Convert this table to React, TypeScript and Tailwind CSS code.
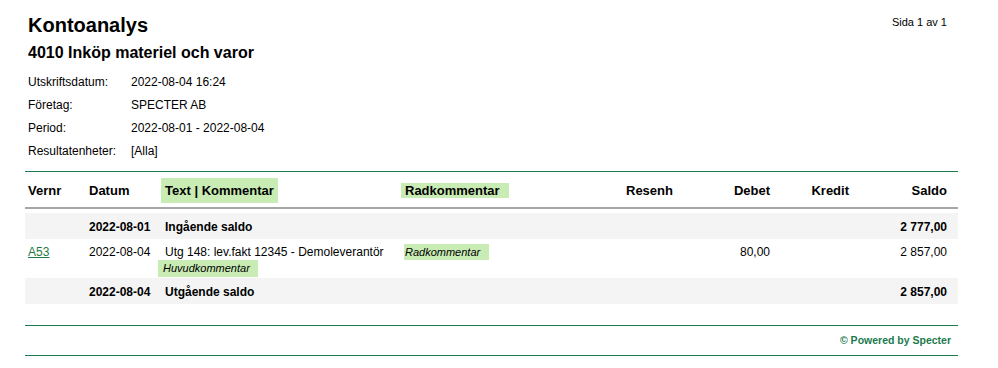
import React from "react";

type Row = {
  kind: "balance" | "entry";
  vernr?: string;
  datum: string;
  text: string;
  comment?: string;
  radkommentar?: string;
  debet?: string;
  kredit?: string;
  saldo: string;
};

const rows: Row[] = [
  { kind: "balance", datum: "2022-08-01", text: "Ingående saldo", saldo: "2 777,00" },
  {
    kind: "entry",
    vernr: "A53",
    datum: "2022-08-04",
    text: "Utg 148: lev.fakt 12345 - Demoleverantör",
    comment: "Huvudkommentar",
    radkommentar: "Radkommentar",
    debet: "80,00",
    saldo: "2 857,00",
  },
  { kind: "balance", datum: "2022-08-04", text: "Utgående saldo", saldo: "2 857,00" },
];

const info = [
  ["Utskriftsdatum:", "2022-08-04 16:24"],
  ["Företag:", "SPECTER AB"],
  ["Period:", "2022-08-01 - 2022-08-04"],
  ["Resultatenheter:", "[Alla]"],
];

// fixed column template shared by header and body rows
const cols = "grid grid-cols-[61px_76px_240px_221px_77px_73px_79px_106px]";

export default function App() {
  return (
    <div className="min-h-[368px] w-[998px] bg-white pl-[25px] pr-[40px] pt-[13px] text-black font-['Liberation_Sans',Arial,sans-serif]">
      {/* Report head */}
      <div className="flex items-start justify-between">
        <div className="pl-[3px]">
          <h1 className="text-[20px] font-bold leading-[24px]">Kontoanalys</h1>
          <h2 className="mt-[6px] text-[16px] font-bold leading-[20px]">4010 Inköp materiel och varor</h2>
          <div className="mt-[7px] flex flex-col text-[12px]">
            {info.map(([label, value]) => (
              <div key={label} className="flex h-[23px] items-center">
                <span className="w-[103px]">{label}</span>
                <span>{value}</span>
              </div>
            ))}
          </div>
        </div>
        <div className="pr-[11px] pt-[2px] text-[11px] leading-[14px]">Sida 1 av 1</div>
      </div>

      {/* Transactions */}
      <div className="mt-[9px] border-t border-[#1b7a4c]">
        <div className={`${cols} h-[37px] items-center pt-[2px] text-[13px] font-bold leading-4 border-b-2 border-[#a6a6a6]`}>
          <div className="pl-[3px]">Vernr</div>
          <div className="pl-[3px]">Datum</div>
          <div className="pl-[3px]">
            <span className="-ml-[4px] bg-[#c8ecb4] px-[4px] py-[5px]">Text | Kommentar</span>
          </div>
          <div className="pl-[3px]">
            <span className="-ml-[4px] bg-[#c8ecb4] pl-[4px] pr-[9px]">Radkommentar</span>
          </div>
          <div className="pl-[3px]">Resenh</div>
          <div className="pr-[3px] text-right">Debet</div>
          <div className="pr-[3px] text-right">Kredit</div>
          <div className="pr-[11px] text-right">Saldo</div>
        </div>

        <div className="mt-[4px] text-[12px] leading-[14px]">
          {rows.map((r, i) =>
            r.kind === "balance" ? (
              <div key={i} className={`${cols} h-[26px] items-center bg-[#f4f4f4] pt-[1px] font-bold`}>
                <div />
                <div className="pl-[3px]">{r.datum}</div>
                <div className="pl-[3px]">{r.text}</div>
                <div />
                <div />
                <div />
                <div />
                <div className="pr-[11px] text-right">{r.saldo}</div>
              </div>
            ) : (
              <div key={i} className={`${cols} h-[39px] items-start pt-[6px]`}>
                <div className="pl-[3px]">
                  <a className="text-[#1f7a45] underline">{r.vernr}</a>
                </div>
                <div className="pl-[3px]">{r.datum}</div>
                <div className="flex flex-col items-start pl-[3px]">
                  <span>{r.text}</span>
                  <span className="-ml-[7px] mt-[1px] bg-[#c8ecb4] pl-[5px] pr-[8px] text-[11px] italic leading-[17px]">
                    {r.comment}
                  </span>
                </div>
                <div className="pl-[3px]">
                  <span className="-ml-[1px] -mt-[1px] inline-block bg-[#c8ecb4] pl-[1px] pr-[9px] text-[11px] italic leading-[16px]">
                    {r.radkommentar}
                  </span>
                </div>
                <div />
                <div className="pr-[3px] text-right">{r.debet}</div>
                <div className="pr-[3px] text-right">{r.kredit}</div>
                <div className="pr-[11px] text-right">{r.saldo}</div>
              </div>
            )
          )}
        </div>
      </div>

      {/* Footer */}
      <div className="mt-[21px] flex h-[31px] items-center justify-end border-y border-[#1b7a4c] pr-[7px] text-[10.5px] font-bold text-[#1b7a4c]">
        © Powered by Specter
      </div>
    </div>
  );
}
